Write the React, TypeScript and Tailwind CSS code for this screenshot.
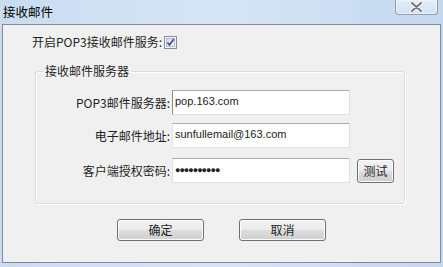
import React from 'react';

const cjk = { fontFamily: '"Noto Sans CJK SC", "Liberation Sans", sans-serif' };
const latin = { fontFamily: '"Liberation Sans", "Noto Sans CJK SC", sans-serif' };

const Field: React.FC<{ label: string; value: React.ReactNode; first?: boolean; extra?: React.ReactNode; className?: string }> = ({ label, value, first, extra, className }) => (
  <div className={`flex items-center ${className ?? ''}`}>
    <div className="w-[136px] pr-[2px] text-right text-[12px] leading-[16px] text-[#1e1e1e]">{label}</div>
    <div
      className={`h-[25px] w-[178px] bg-white border border-[#dde2e8] border-t-[#abadb3] px-[2px] pt-[3px] text-[11px] leading-[14px] text-[#222] ${first ? 'border-l-[#8e8e8e]' : ''}`}
      style={latin}
    >
      {value}
    </div>
    {extra}
  </div>
);

const Button: React.FC<{ children: React.ReactNode; className?: string }> = ({ children, className }) => (
  <button
    className={`flex items-center justify-center rounded-[3px] border border-[#707070] bg-[linear-gradient(#f2f2f2_0%,#ebebeb_50%,#dddddd_51%,#cfcfcf_100%)] text-[12px] text-[#1e1e1e] shadow-[inset_0_0_0_1px_#fcfcfc] ${className ?? ''}`}
    style={cjk}
  >
    {children}
  </button>
);

const App: React.FC = () => {
  return (
    <div className="w-[443px] h-[267px] flex flex-col bg-[linear-gradient(90deg,#c9dcf1,#d6e5f5_50%,#c4d8ef)] overflow-hidden" style={cjk}>
      {/* Title bar */}
      <div className="h-[24px] flex justify-between">
        <div className="pl-[3px] pt-[3px] text-[12.5px] leading-[17px] text-black">接收邮件</div>
        <div className="mr-[5px] h-[15px] w-[43px] rounded-b-[4px] border border-t-0 border-[#8e9db0] bg-[linear-gradient(#e3edf8,#d2e1f2)] flex items-center justify-center shadow-[inset_0_0_0_1px_#eef4fb]">
          <svg width="13" height="10" viewBox="0 0 13 10">
            <path d="M2 1 L11 9 M11 1 L2 9" stroke="#f8f8f8" strokeWidth="4" strokeLinecap="round" />
            <path d="M2 1 L11 9 M11 1 L2 9" stroke="#767a80" strokeWidth="2" strokeLinecap="round" />
          </svg>
        </div>
      </div>

      {/* Client area */}
      <div className="flex-1 mx-[2px] mb-[4px] border border-[#858b94] bg-[#f0f0f0] flex flex-col">
        <div className="mt-[9px] pl-[29px] flex items-center text-[12px] leading-[16px] text-[#1e1e1e]">
          <span>开启POP3接收邮件服务:</span>
          <svg width="13" height="13" viewBox="0 0 13 13" className="ml-[2px]">
            <defs>
              <linearGradient id="cb" x1="0" y1="0" x2="1" y2="1">
                <stop offset="0" stopColor="#d8dce4" />
                <stop offset="1" stopColor="#f6f6f6" />
              </linearGradient>
            </defs>
            <rect x="0.5" y="0.5" width="12" height="12" fill="#f4f4f4" stroke="#8e8f8f" />
            <rect x="2.5" y="2.5" width="8" height="8" fill="url(#cb)" stroke="#b7bdc8" />
            <path d="M3.5 6.5 L5.5 9 L9.8 3" stroke="#2a4fa8" strokeWidth="1.6" fill="none" />
          </svg>
        </div>

        <fieldset className="mt-[13px] ml-[32px] w-[370px] rounded-[3px] border border-[#d5dfe5] shadow-[inset_1px_1px_0_#ffffff,1px_1px_0_#ffffff] pb-[20px]">
          <legend className="ml-[7px] px-[2px] text-[12px] leading-[16px] text-[#1e1e1e]">接收邮件服务器</legend>
          <Field className="mt-[11px]" label="POP3邮件服务器:" value="pop.163.com" first />
          <Field className="mt-[8px]" label="电子邮件地址:" value="sunfullemail@163.com" />
          <Field
            className="mt-[10px]"
            label="客户端授权密码:"
            value={<span className="text-[9px] tracking-[-1px] font-bold">●●●●●●●●●●</span>}
            extra={<Button className="ml-[7px] h-[24px] w-[37px]">测试</Button>}
          />
        </fieldset>

        <div className="mt-[15px] flex pl-[114px] gap-[35px]">
          <Button className="h-[22px] w-[87px]">确定</Button>
          <Button className="h-[22px] w-[87px]">取消</Button>
        </div>
      </div>
    </div>
  );
};

export default App;
